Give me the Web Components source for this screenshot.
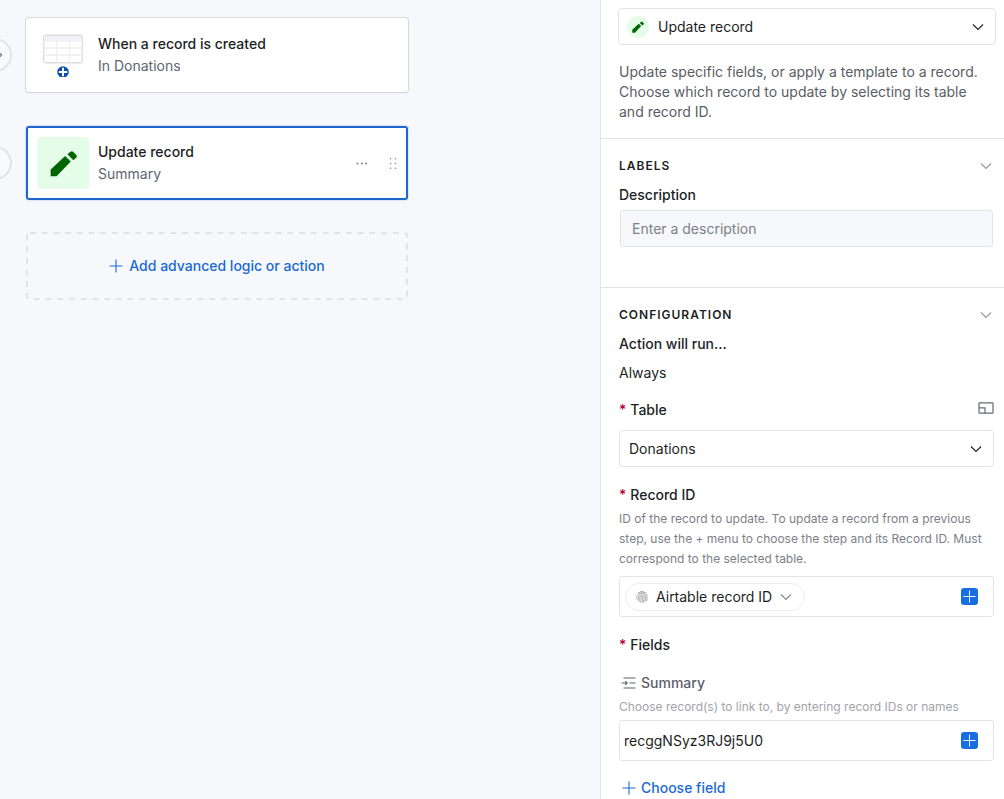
<!DOCTYPE html>
<html lang="en">
<head>
<meta charset="utf-8">
<title>Automation editor</title>
<style>
  body { margin: 0; font-family: Inter, "Liberation Sans", sans-serif; font-size: 14px; line-height: 20px; color: #1d1f25; background: #f6f8fc; }
</style>
</head>
<body>
<automation-editor></automation-editor>
<script>
const ICONS = {
  pencil: '<svg viewBox="0 0 82 82"><path fill="#006400" d="M2 80V59L46 18 63 35 20 80zM53 13 61 6Q66 2 70 5L80 15Q83 19 80 23L71 31z"/></svg>',
  chevron: '<svg viewBox="0 0 12 12"><path d="M1 3.5 6 8.5 11 3.5" fill="none" stroke="currentColor" stroke-width="1.1"/></svg>',
  plus: '<svg viewBox="0 0 14 14"><path d="M7 .5v13M.5 7h13" fill="none" stroke="currentColor" stroke-width="1.1"/></svg>',
  table: '<svg viewBox="0 -1.5 40 44"><rect x=".75" y=".75" width="38.5" height="27.5" rx="2" fill="#fff" stroke="#dddde0" stroke-width="1.3"/><path fill="#f1f1f7" d="M1.5 1.5h37v6h-37z"/><path d="M1.5 13.5h37M1.5 20.5h37M13.5 7.5V28M26.5 7.5V28" stroke="#ededf2" stroke-width="1.3"/><circle cx="20" cy="37.5" r="5.8" fill="#0b4fa8"/><path d="M20 34v7M16.5 37.5h7" stroke="#fff" stroke-width="2" stroke-linecap="round"/></svg>',
  more: '<svg viewBox="0 0 12 12" fill="#777b84"><circle cx="1.5" cy="6.5" r=".9"/><circle cx="5.8" cy="6.5" r=".9"/><circle cx="10.1" cy="6.5" r=".9"/></svg>',
  grip: '<svg viewBox="0 0 12 12" fill="#8a8d95"><circle cx="3.5" cy="1.8" r=".8"/><circle cx="8.5" cy="1.8" r=".8"/><circle cx="3.5" cy="6.5" r=".8"/><circle cx="8.5" cy="6.5" r=".8"/><circle cx="3.5" cy="11.2" r=".8"/><circle cx="8.5" cy="11.2" r=".8"/></svg>',
  expand: '<svg viewBox="0 0 16 12" fill="none" stroke="#666a73" stroke-width="1.2"><rect x="1" y=".8" width="14" height="10.4" rx=".6"/><path d="M1 5.8h6v5.4"/></svg>',
  link: '<svg viewBox="0 0 16 12"><path d="M3.5 6h7M12.500 4 14.500 6 12.500 8 10.500 6z" fill="none" stroke="#666a73" stroke-width="1.2"/></svg>',
  finger: '<svg viewBox="0 0 14 14" fill="none" stroke="#8a8d95" stroke-width=".8" stroke-linecap="round"><path d="M2 3.6A6 6 0 0 1 13 7c0 1.700-.2 3-.6 4.200M1.200 5.400A6 6 0 0 0 1 9.500M2.400 11C3 9.500 2.700 8 2.700 7a4.300 4.300 0 0 1 8.600 0c0 2-.2 3.800-.8 5.400M3.800 12.300C4.600 10.500 4.400 8.500 4.400 7a2.600 2.600 0 0 1 5.200 0c0 2.300-.3 4.300-1 6.200M5.400 13C6 11.200 6.200 9 6.100 7a.9.9 0 0 1 1.800 0c0 2.300-.2 4.400-.8 6.400M3 2A6.500 6.500 0 0 1 11 2"/></svg>',
  field: '<svg viewBox="0 0 16 14" fill="none" stroke="#5c606a" stroke-width="1.1"><path d="M2.500 2h12M8.500 7h6M2.500 12h12M.5 7h5.500M4.300 5.200 6.200 7 4.300 8.800"/></svg>'
};

class Base extends HTMLElement {
  attr(name) { return this.getAttribute(name) || ''; }
  connectedCallback() {
    if (this.shadowRoot) return;
    this.attachShadow({ mode: 'open' }).innerHTML = `<style>
      *, *::before { box-sizing: border-box; }
      :host { display: block; }
      svg { display: block; }
      p, h2, h3 { margin: 0; font-weight: inherit; font-size: inherit; }
      button, input, select { font: inherit; color: inherit; margin: 0; padding: 0; border: 0; background: none; }
      button { cursor: pointer; }
      label, .label { display: block; font-weight: 500; }
    </style>` + this.render();
  }
}

customElements.define('ui-icon', class extends Base {
  render() {
    return `<style>:host { flex: none; width: var(--w, 12px); } svg { width: 100%; }</style>${ICONS[this.attr('name')]}`;
  }
});

customElements.define('flow-step', class extends Base {
  render() {
    const picked = this.hasAttribute('selected');
    return `<style>
      .row { display: grid; grid-template-columns: 26px minmax(0, 382px); align-items: center; }
      .knob { width: 34px; height: 34px; margin-left: -22px; border: 2px solid #e1e3e8; border-radius: 50%; display: grid; place-items: center; background: #f9fafd; }
      .knob ui-icon { --w: 16px; }
      .card { height: 74px; border-radius: 3px; background: #fff; display: flex; align-items: center; box-shadow: 0 0 0 1px #d6d8de, 0 1px 2px #0000001a; padding: 0 9px 0 11px; }
      :host([selected]) .card { box-shadow: inset 0 0 0 2px #1f66cc, 0 0 2px #1b61c966; }
      .art { flex: none; width: 52px; height: 52px; border-radius: 4px; display: grid; place-items: center; --w: 40px; }
      :host([selected]) .art { background: #e5fce8; --w: 27px; }
      .text { flex: 1; margin-left: 9px; line-height: 22px; }
      h2 { font-weight: 500; }
      p { color: #616670; }
      .tools { display: flex; gap: 19px; }
    </style>
    <div class="row">
      <button class="knob" aria-label="Step status">${picked ? '' : '<ui-icon name="link"></ui-icon>'}</button>
      <div class="card">
        <div class="art"><ui-icon name="${this.attr('icon')}"></ui-icon></div>
        <div class="text"><h2>${this.attr('heading')}</h2><p><slot></slot></p></div>
        ${picked ? '<div class="tools"><button aria-label="More options"><ui-icon name="more"></ui-icon></button><button aria-label="Drag step"><ui-icon name="grip"></ui-icon></button></div>' : ''}
      </div>
    </div>`;
  }
});

customElements.define('add-step', class extends Base {
  render() {
    return `<style>
      :host { max-width: 382px; }
      button { position: relative; width: 100%; height: 68px; display: flex; align-items: center; justify-content: center; gap: 6px; color: #1b69d4; font-weight: 500; }
      .dash { position: absolute; inset: 0; width: 100%; height: 100%; }
      .dash rect { x: 1px; y: 1px; width: calc(100% - 2px); height: calc(100% - 2px); }
      ui-icon { --w: 14px; }
    </style>
    <button><svg class="dash" aria-hidden="true"><rect rx="3" fill="none" stroke="#e1e3e7" stroke-width="2" stroke-dasharray="6 5.7"/></svg><ui-icon name="plus"></ui-icon><span><slot></slot></span></button>`;
  }
});

customElements.define('select-field', class extends Base {
  render() {
    const req = this.hasAttribute('required');
    return `<style>
      .head { display: flex; justify-content: space-between; align-items: flex-start; margin-bottom: 10px; }
      .head button { padding-top: 2px; }
      .head ui-icon { --w: 16px; }
      .star { color: #b1003d; margin-right: 4px; }
      .box { display: grid; align-items: center; }
      .box > * { grid-area: 1 / 1; }
      select { appearance: none; width: 100%; height: 37px; border: 1px solid #e3e4e8; border-radius: 4px; background: #fff; padding: 0 32px 0 9px; }
      :host([icon]) select { padding-left: 39px; }
      .arrow { justify-self: end; margin-right: 12px; pointer-events: none; }
      .badge { width: 22px; height: 22px; margin-left: 9px; border-radius: 50%; background: #e5fce8; display: grid; place-items: center; pointer-events: none; --w: 12px; }
    </style>
    ${req ? `<div class="head"><label for="s"><span class="star">*</span>${this.attr('label')}</label><button aria-label="Expand"><ui-icon name="expand"></ui-icon></button></div>` : ''}
    <div class="box">
      <select id="s" ${req ? '' : `aria-label="${this.attr('label')}"`}><option>${this.attr('value')}</option></select>
      ${this.hasAttribute('icon') ? `<span class="badge"><ui-icon name="${this.attr('icon')}"></ui-icon></span>` : ''}
      <ui-icon class="arrow" name="chevron"></ui-icon>
    </div>`;
  }
});

customElements.define('panel-section', class extends Base {
  render() {
    return `<style>
      :host { border-top: 1px solid #e1e3e8; padding: 17px 10px 0 18px; }
      .head { width: 100%; display: flex; justify-content: space-between; align-items: center; margin-bottom: 9px; }
      .head span { font-size: 12px; font-weight: 600; letter-spacing: 1px; }
      .head ui-icon { color: #94979e; margin-right: 2px; }
    </style>
    <h2><button class="head" aria-expanded="true"><span>${this.attr('heading')}</span><ui-icon name="chevron"></ui-icon></button></h2><slot></slot>`;
  }
});

customElements.define('text-field', class extends Base {
  render() {
    return `<style>
      :host { padding-bottom: 40px; }
      label { margin-bottom: 5px; }
      .box { padding: 0 1px; }
      input { display: block; width: 100%; height: 37px; border: 1px solid #e2e4e9; border-radius: 3px; background: #f6f8fc; padding: 0 11px; }
      input::placeholder { color: #7d8087; opacity: 1; }
    </style>
    <label for="i">${this.attr('label')}</label><div class="box"><input id="i" placeholder="${this.attr('placeholder')}"></div>`;
  }
});

customElements.define('token-box', class extends Base {
  render() {
    return `<style>
      :host { height: 41px; border: 1px solid #e3e4e8; border-radius: 3px; display: flex; align-items: center; padding: 0 15px 0 0; }
      .content { flex: 1; min-width: 0; }
      .insert { width: 17px; height: 17px; border-radius: 3px; background: #166ee1; color: #fff; display: grid; place-items: center; --w: 13px; }
    </style>
    <div class="content"><slot></slot></div><button class="insert" aria-label="Insert value"><ui-icon name="plus"></ui-icon></button>`;
  }
});

customElements.define('record-field', class extends Base {
  render() {
    return `<style>
      :host { margin-top: 18px; }
      .star { color: #b1003d; margin-right: 4px; }
      .help { font-size: 12px; color: #7d8087; margin: 4px 0 7px; }
      .chip { height: 28px; margin-left: 5px; padding: 0 12px 0 10px; border: 1px solid #ebecef; border-radius: 14px; display: flex; align-items: center; gap: 8px; }
      .chip ui-icon:last-child { color: #85888f; }
    </style>
    <div class="label" id="l"><span class="star">*</span>${this.attr('label')}</div>
    <p class="help"><slot></slot></p>
    <token-box role="group" aria-labelledby="l"><button class="chip"><ui-icon name="finger"></ui-icon><span>${this.attr('value')}</span><ui-icon name="chevron"></ui-icon></button></token-box>`;
  }
});

customElements.define('summary-fields', class extends Base {
  render() {
    return `<style>
      :host { margin-top: 18px; }
      h3 { font-weight: 500; margin-bottom: 18px; }
      .star { color: #b1003d; margin-right: 4px; }
      label { display: flex; align-items: center; gap: 4px; padding-left: 2px; color: #5c606a; --w: 16px; }
      .help { font-size: 12px; color: #a2a4a9; margin: 4px 0 3px; }
      input { display: block; width: 100%; height: 36px; padding: 0 4px; outline-offset: -2px; }
      .add { display: flex; align-items: center; gap: 5px; margin-top: 17px; padding-left: 3px; color: #1b69d4; font-weight: 500; --w: 14px; }
    </style>
    <h3><span class="star">*</span>Fields</h3>
    <label for="v"><ui-icon name="field"></ui-icon>Summary</label>
    <p class="help">Choose record(s) to link to, by entering record IDs or names</p>
    <token-box><input id="v" value="recggNSyz3RJ9j5U0"></token-box>
    <button class="add"><ui-icon name="plus"></ui-icon>Choose field</button>`;
  }
});

customElements.define('automation-editor', class extends Base {
  render() {
    return `<style>
      :host { display: grid; grid-template-columns: minmax(0, 1fr) 404px; min-height: 100vh; }
      main { overflow: hidden; padding-top: 18px; }
      .next { margin-top: 34px; }
      add-step { margin: 32px 0 0 26px; }
      aside { background: #fff; border-left: 1px solid #e1e3e8; }
      .intro { padding: 8px 8px 16px 17px; }
      .intro p { margin-top: 17px; padding: 0 10px 0 1px; color: #5a5d64; }
      .always { margin: 9px 0 17px; }
    </style>
    <main>
      <flow-step icon="table" heading="When a record is created">In Donations</flow-step>
      <flow-step class="next" selected icon="pencil" heading="Update record">Summary</flow-step>
      <add-step>Add advanced logic or action</add-step>
    </main>
    <aside>
      <div class="intro">
        <select-field icon="pencil" label="Action type" value="Update record"></select-field>
        <p>Update specific fields, or apply a template to a record. Choose which record to update by selecting its table and record ID.</p>
      </div>
      <panel-section heading="LABELS"><text-field label="Description" placeholder="Enter a description"></text-field></panel-section>
      <panel-section heading="CONFIGURATION">
        <div class="label">Action will run...</div>
        <p class="always">Always</p>
        <select-field required label="Table" value="Donations"></select-field>
        <record-field label="Record ID" value="Airtable record ID">ID of the record to update. To update a record from a previous step, use the + menu to choose the step and its Record ID. Must correspond to the selected table.</record-field>
        <summary-fields></summary-fields>
      </panel-section>
    </aside>`;
  }
});
</script>
</body>
</html>
